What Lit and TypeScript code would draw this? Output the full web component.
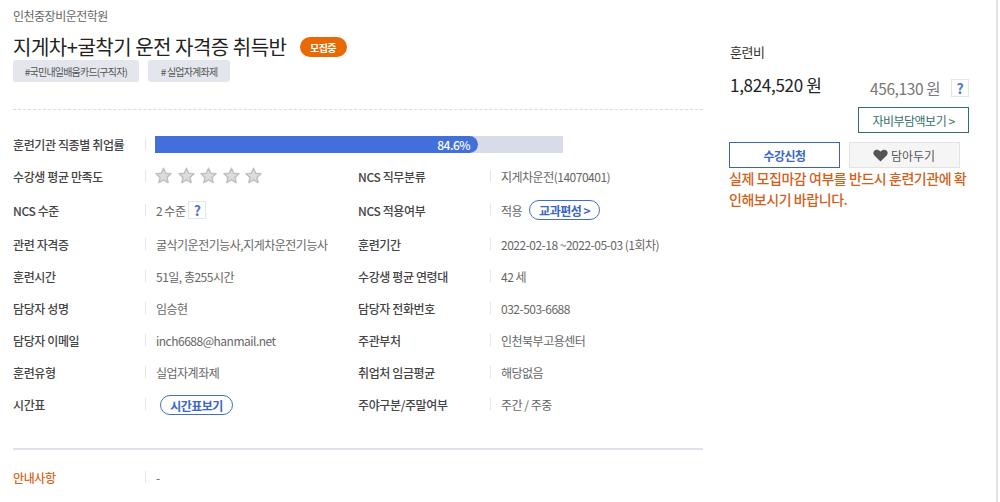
import { LitElement, html, css } from "lit";
import { customElement } from "lit/decorators.js";

@customElement("app-root")
export class AppRoot extends LitElement {
  static styles = css`
    :host { display: block; width: 1000px; height: 502px; overflow: hidden; background: #fff; font-family: "Noto Sans CJK KR", "Noto Sans", sans-serif; color: #666; font-size: 12px; letter-spacing: -0.5px; }
    .page { display: flex; padding-left: 13px; height: 502px; box-sizing: border-box; }
    .left { width: 690px; flex: none; padding-top: 7px; }
    .academy { font-size: 12px; line-height: 17px; color: #666; }
    .title-row { display: flex; align-items: center; margin-top: 10px; height: 26px; }
    h1 { margin: 0; font-size: 20px; font-weight: 400; color: #222; line-height: 26px; letter-spacing: -0.48px; }
    .badge { margin-left: 13px; width: 47px; height: 20px; border-radius: 10px; background: #e96a04; color: #fff; font-size: 10px; font-weight: 700; display: flex; align-items: center; justify-content: center; }
    .tags { display: flex; gap: 9px; }
    .tag { height: 22px; border-radius: 3px; background: #e3e6ec; font-size: 10px; color: #555; display: flex; align-items: center; justify-content: center; letter-spacing: -0.8px; }
    .t1 { width: 126px; } .t2 { width: 82px; }
    .dash { border-top: 1px dashed #d8dbe0; margin-top: 27px; }
    .grid { display: grid; grid-template-columns: 345px 345px; margin-top: 18px; }
    .cell { display: flex; align-items: center; height: 32px; }
    .tall { height: 36px; }
    .lab { width: 132px; flex: none; color: #444; font-size: 12px; font-weight: 500; letter-spacing: -0.38px; }
    .sep { width: 1px; height: 12px; background: #e6e6e6; flex: none; margin-right: 10px; }
    .val { color: #666; font-size: 12px; display: flex; align-items: center; white-space: nowrap; }
    .full { grid-column: 1 / 3; }
    .bar { width: 408px; height: 17px; background: #d7dce8; margin-left: -1px; }
    .fill { height: 17px; background: #426fd9; border-radius: 0 9px 9px 0; color: #fff; font-size: 12px; font-weight: 500; display: flex; align-items: center; justify-content: flex-end; padding-right: 8px; box-sizing: border-box; }
    .stars { display: flex; gap: 5.5px; margin: -1px 0 0 -1px; }
    .q { width: 18px; height: 18px; border: 1px solid #e2e5ea; color: #4a78cc; font-weight: 700; font-size: 14px; display: inline-flex; align-items: center; justify-content: center; background: #fff; box-sizing: border-box; letter-spacing: 0; }
    .q1 { margin-left: 3px; }
    .pill { border: 1px solid #426fbf; border-radius: 10px; color: #3a66c4; font-weight: 700; height: 20px; box-sizing: border-box; display: inline-flex; align-items: center; justify-content: center; background: #fff; }
    .p1 { width: 71px; margin-left: 7px; } .p2 { width: 73px; margin: 2px 0 0 4px; }
    .rule { height: 2px; background: #dfe1ec; margin-top: 28px; }
    .notice { display: flex; align-items: center; height: 32px; margin-top: 11px; }
    .orange { color: #d8641a; }
    .right { margin-left: 26px; width: 241px; padding-top: 43px; }
    .fee { color: #333; font-size: 13px; line-height: 18px; padding-left: 1px; }
    .prices { display: flex; align-items: center; margin-top: 12px; height: 22px; padding-left: 1px; }
    .price { font-size: 17px; color: #222; letter-spacing: -0.3px; width: 140px; }
    .price2 { font-size: 15.5px; color: #777; margin-top: 8px; letter-spacing: -0.4px; width: 81px; }
    .q2 { margin-top: 7px; }
    .self { margin: 12px 0 0 129px; width: 111px; height: 26px; border: 1px solid #2f6f6c; box-sizing: border-box; display: flex; align-items: center; justify-content: center; color: #33706d; font-size: 12px; }
    .btns { display: flex; gap: 9px; margin-top: 9px; }
    .btn { width: 111px; height: 26px; box-sizing: border-box; display: flex; align-items: center; justify-content: center; font-size: 12px; }
    .apply { border: 1px solid #3b64b8; color: #3a66c4; font-weight: 700; }
    .save { border: 1px solid #e3e3e3; background: #f5f5f5; color: #555; gap: 3px; letter-spacing: 0; padding-right: 1px; }
    .warn { color: #d2601a; font-size: 14px; font-weight: 500; line-height: 21px; margin-top: 0; width: 240px; letter-spacing: -0.45px; word-break: break-all; }
    .edge { width: 2px; height: 100%; background: #e2e2e2; margin-left: 26px; flex: none; }
  `;

  cell(label: string, val: unknown, tall = false) {
    return html`<div class="cell ${tall ? "tall" : ""}"><span class="lab">${label}</span><i class="sep"></i><div class="val">${val}</div></div>`;
  }

  star() {
    return html`<svg width="17" height="17" viewBox="0 0 17 17"><path d="M8.5 1.3l2.2 4.9 5.3.6-4 3.6 1.1 5.2-4.6-2.7-4.6 2.7 1.1-5.2-4-3.6 5.3-.6z" fill="#dcdcdc" stroke="#c0c0c0" stroke-width="1.5" stroke-linejoin="round"/></svg>`;
  }

  render() {
    const fill = 79.2;
    return html`<div class="page">
      <div class="left">
        <div class="academy">인천중장비운전학원</div>
        <div class="title-row"><h1>지게차+굴착기 운전 자격증 취득반</h1><span class="badge">모집중</span></div>
        <div class="tags"><span class="tag t1">#국민내일배움카드(구직자)</span><span class="tag t2"># 실업자계좌제</span></div>
        <div class="dash"></div>
        <div class="grid">
          <div class="cell full"><span class="lab">훈련기관 직종별 취업률</span><i class="sep"></i><div class="bar"><div class="fill" style="width:${fill}%">84.6%</div></div></div>
          ${this.cell("수강생 평균 만족도", html`<div class="stars">${[1, 2, 3, 4, 5].map(() => this.star())}</div>`)}
          ${this.cell("NCS 직무분류", "지게차운전(14070401)")}
          ${this.cell("NCS 수준", html`2 수준<span class="q q1">?</span>`, true)}
          ${this.cell("NCS 적용여부", html`적용<span class="pill p1">교과편성 &gt;</span>`, true)}
          ${this.cell("관련 자격증", "굴삭기운전기능사,지게차운전기능사")}
          ${this.cell("훈련기간", "2022-02-18 ~2022-05-03 (1회차)")}
          ${this.cell("훈련시간", "51일, 총255시간")}
          ${this.cell("수강생 평균 연령대", "42 세")}
          ${this.cell("담당자 성명", "임승현")}
          ${this.cell("담당자 전화번호", "032-503-6688")}
          ${this.cell("담당자 이메일", "inch6688@hanmail.net")}
          ${this.cell("주관부처", "인천북부고용센터")}
          ${this.cell("훈련유형", "실업자계좌제")}
          ${this.cell("취업처 임금평균", "해당없음")}
          ${this.cell("시간표", html`<span class="pill p2">시간표보기</span>`)}
          ${this.cell("주야구분/주말여부", "주간 / 주중")}
        </div>
        <div class="rule"></div>
        <div class="notice"><span class="lab orange">안내사항</span><i class="sep"></i><div class="val">-</div></div>
      </div>
      <div class="right">
        <div class="fee">훈련비</div>
        <div class="prices"><span class="price">1,824,520 원</span><span class="price2">456,130 원</span><span class="q q2">?</span></div>
        <div class="self">자비부담액보기 &gt;</div>
        <div class="btns">
          <div class="btn apply">수강신청</div>
          <div class="btn save"><svg width="15" height="13" viewBox="0 0 15 13"><path d="M7.5 12.6L1.4 6.6C-.2 4.9.1 2.6 1.5 1.4 3 .2 5.4.3 7.5 2.6 9.6.3 12 .2 13.5 1.4c1.4 1.2 1.7 3.5.1 5.2z" fill="#555"/></svg>담아두기</div>
        </div>
        <div class="warn">실제 모집마감 여부를 반드시 훈련기관에 확인해보시기 바랍니다.</div>
      </div>
      <div class="edge"></div>
    </div>`;
  }
}
